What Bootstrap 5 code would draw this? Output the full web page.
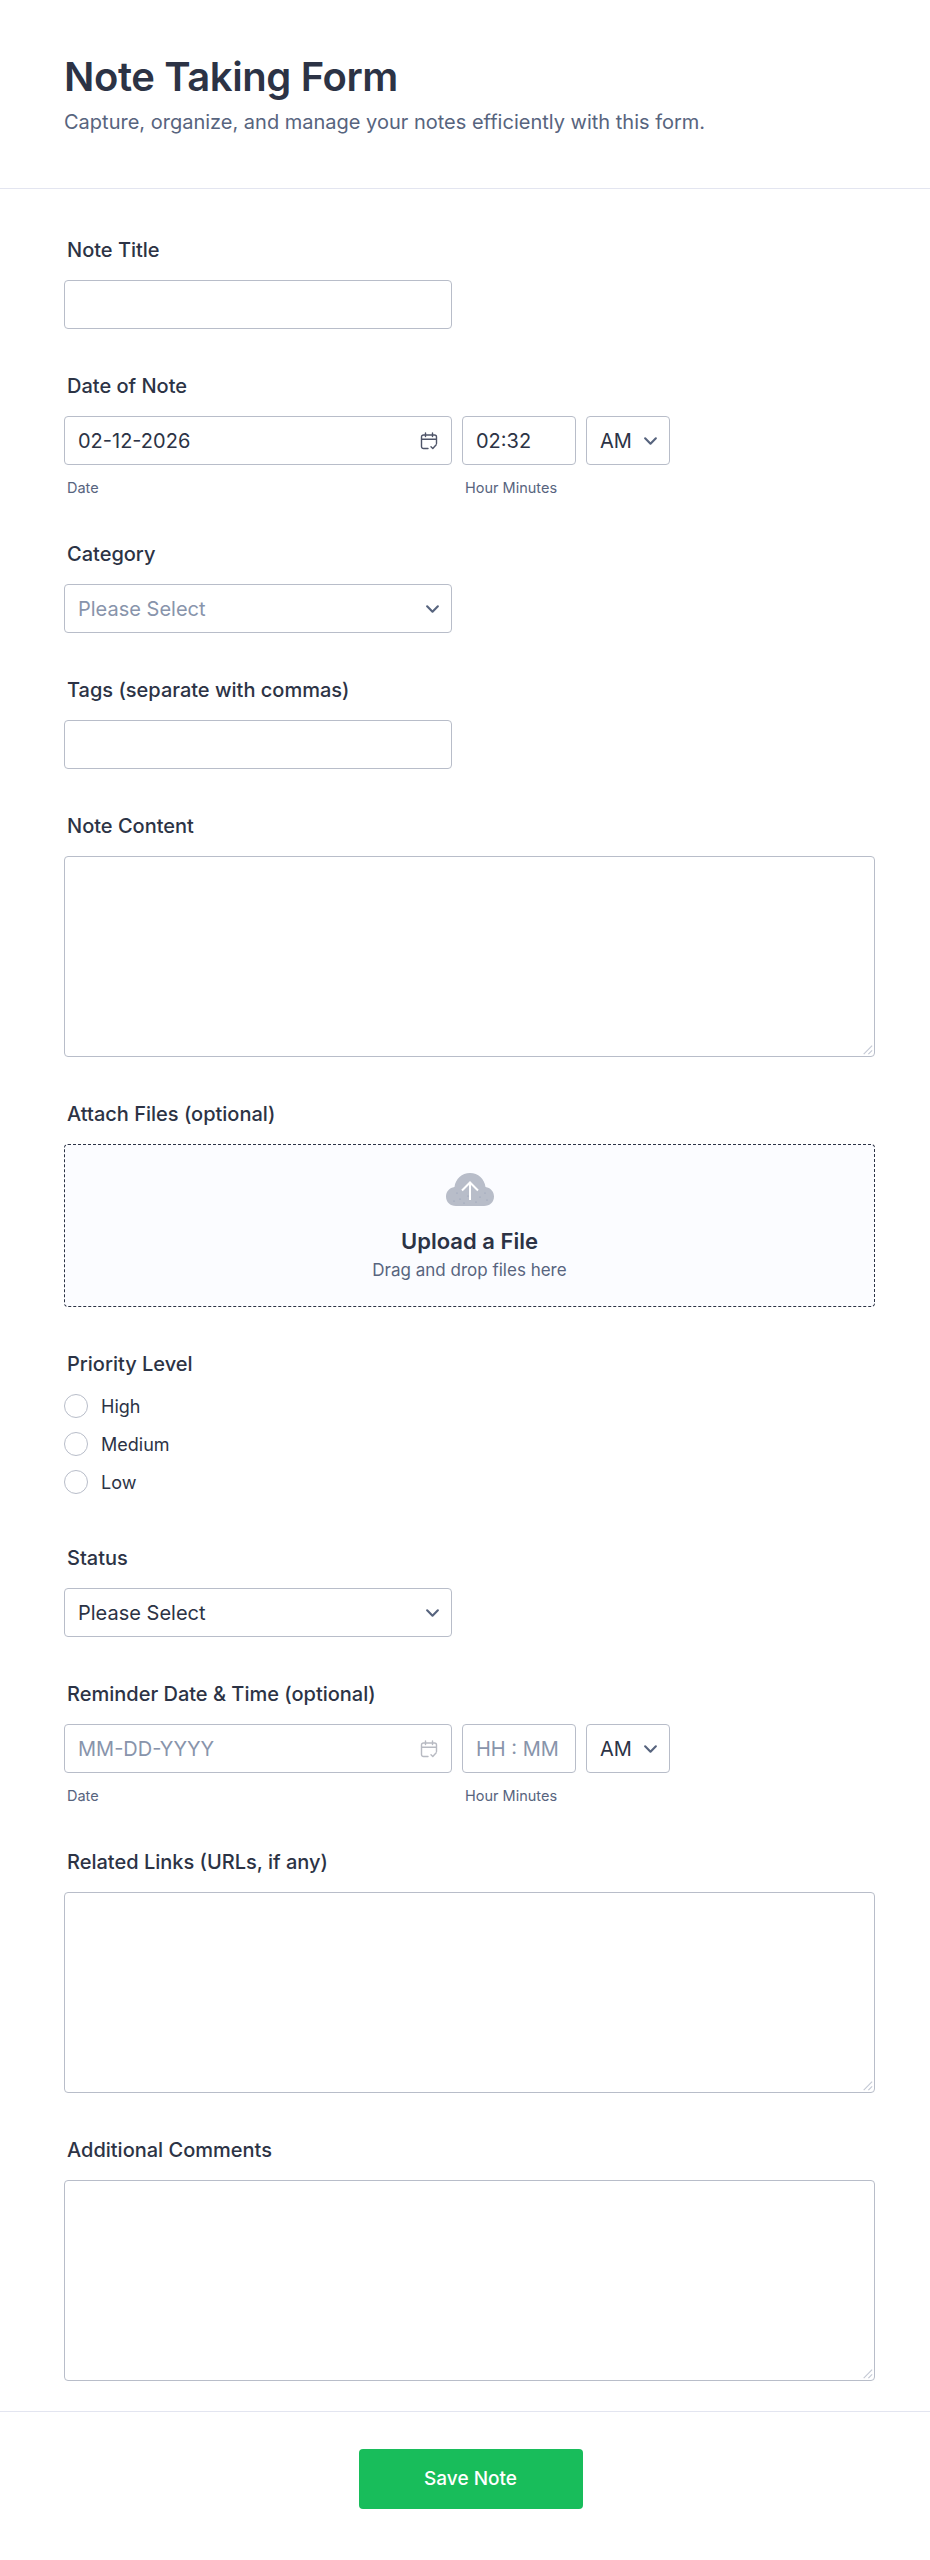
<!DOCTYPE html>
<html lang="en">
<head>
  <meta charset="UTF-8">
  <title>Note Taking Form</title>
  <link href="https://cdn.jsdelivr.net/npm/bootstrap@5.3.0/dist/css/bootstrap.min.css" rel="stylesheet">
  <style>
    body {
      font-family: Inter, "Liberation Sans", sans-serif;
      color: #2c3345;
      background: #fff;
    }
    .form-head {
      height: 189px;
      padding: 53px 64px 0;
      border-bottom: 1px solid #e3e5f0;
    }
    .form-head h1 {
      font-size: 40px;
      line-height: 48px;
      font-weight: 600;
      letter-spacing: -.4px;
      color: #2c3345;
      margin: 0 0 7px;
    }
    .form-head p {
      font-size: 20px;
      line-height: 28px;
      color: #57647e;
      margin: 0;
    }
    .form-body {
      padding: 49px 55px 0 64px;
    }
    .field-box {
      margin-bottom: 45px;
    }
    .field-label {
      display: block;
      font-size: 20px;
      line-height: 24px;
      font-weight: 500;
      color: #2c3345;
      padding-left: 3px;
      margin-bottom: 18px;
    }
    .form-control, .form-select {
      height: 49px;
      font-family: inherit;
      font-size: 20px;
      color: #2c3345;
      border: 1px solid #b8bdc9;
      border-radius: 4px;
      padding: 0 13px;
      box-shadow: none;
    }
    .form-control::placeholder {
      color: #8894ab;
    }
    textarea.form-control {
      height: 201px;
    }
    textarea.form-control::-webkit-resizer {
      background: url("data:image/svg+xml,%3csvg xmlns='http://www.w3.org/2000/svg' viewBox='0 0 16 16'%3e%3cpath fill='none' stroke='%23c3c8d4' stroke-width='1.2' d='M5 14L14 5M10 14l4-4'/%3e%3c/svg%3e") no-repeat center;
    }
    .form-select {
      padding-right: 30px;
      background-image: url("data:image/svg+xml,%3csvg xmlns='http://www.w3.org/2000/svg' viewBox='0 0 14 9'%3e%3cpath fill='none' stroke='%2357647e' stroke-width='2' stroke-linecap='round' stroke-linejoin='round' d='M2 2l5 5 5-5'/%3e%3c/svg%3e");
      background-size: 15px 10px;
      background-position: right 11px center;
    }
    .select-empty {
      color: #8894ab;
    }
    .wide-input {
      width: 388px;
    }
    .time-input {
      width: 114px;
    }
    .ampm-select {
      width: 84px;
    }
    .date-row {
      gap: 10px;
    }
    .date-icon {
      position: absolute;
      top: 16px;
      right: 14px;
      width: 18px;
      height: 18px;
      color: #4e5468;
    }
    .date-icon.faded {
      opacity: .4;
    }
    .sub-label {
      font-size: 14.500px;
      line-height: 18px;
      color: #57647e;
      padding-left: 3px;
      margin-top: 14px;
    }
    .drop-zone {
      height: 163px;
      background: #fbfcff;
      border: 1px dashed #2c3345;
      border-radius: 4px;
      padding-top: 28px;
    }
    .drop-title {
      font-size: 22px;
      line-height: 28px;
      font-weight: 600;
      margin-top: 21px;
    }
    .drop-hint {
      font-size: 17px;
      line-height: 24px;
      color: #57647e;
      margin-top: 3px;
    }
    .choice-list {
      margin-top: -7px;
    }
    .choice-row {
      display: flex;
      align-items: center;
      gap: 13px;
      height: 38px;
      font-size: 18px;
    }
    .choice-row .form-check-input {
      width: 24px;
      height: 24px;
      margin: 0;
      border: 1px solid #b8bdc9;
    }
    .form-foot {
      border-top: 1px solid #e3e5f0;
      margin-top: -15px;
      padding: 37px 0 0 11px;
    }
    .save-btn {
      width: 224px;
      height: 60px;
      font-size: 19px;
      font-weight: 500;
      color: #fff;
      background: #18bd5b;
      border: 0;
      border-radius: 4px;
    }
  </style>
</head>
<body>
  <svg width="0" height="0" class="d-none">
    <symbol id="cal" viewBox="0 0 18 18">
      <path fill="none" stroke="currentColor" stroke-width="1.4" stroke-linecap="round" stroke-linejoin="round" d="M8 16.500H3.500A2 2 0 0 1 1.500 14.500V5A2 2 0 0 1 3.500 3h11a2 2 0 0 1 2 2v6.500M1.500 7.300h15M5.500 1v3.500M12.500 1v3.500M11 14.800l1.800 1.700 3.400-3.800"/>
    </symbol>
  </svg>

  <header class="form-head">
    <h1>Note Taking Form</h1>
    <p>Capture, organize, and manage your notes efficiently with this form.</p>
  </header>

  <form class="form-body">
    <div class="field-box">
      <label class="field-label" for="noteTitle">Note Title</label>
      <input type="text" class="form-control wide-input" id="noteTitle">
    </div>

    <div class="field-box">
      <label class="field-label" for="noteDate">Date of Note</label>
      <div class="d-flex date-row">
        <div class="position-relative">
          <input type="text" class="form-control wide-input" id="noteDate" value="02-12-2026">
          <svg class="date-icon"><use href="#cal"/></svg>
          <div class="sub-label">Date</div>
        </div>
        <div>
          <input type="text" class="form-control time-input" value="02:32">
          <div class="sub-label">Hour Minutes</div>
        </div>
        <div>
          <select class="form-select ampm-select"><option>AM</option><option>PM</option></select>
        </div>
      </div>
    </div>

    <div class="field-box">
      <label class="field-label" for="category">Category</label>
      <select class="form-select wide-input select-empty" id="category"><option>Please Select</option></select>
    </div>

    <div class="field-box">
      <label class="field-label" for="tags">Tags (separate with commas)</label>
      <input type="text" class="form-control wide-input" id="tags">
    </div>

    <div class="field-box">
      <label class="field-label" for="noteContent">Note Content</label>
      <textarea class="form-control" id="noteContent"></textarea>
    </div>

    <div class="field-box">
      <label class="field-label">Attach Files (optional)</label>
      <div class="drop-zone text-center">
        <svg width="48" height="33" viewBox="0 0 48 33" class="d-block mx-auto">
          <path fill="#b8bdc9" d="M10 33C4 33 0 29 0 23.500 0 18.500 3.500 14.800 8.500 14 9.500 6 15.800 0 24 0s14.500 6 15.500 14C44.500 14.800 48 18.500 48 23.500 48 29 44 33 38 33z"/>
          <g fill="#8e9ab5">
            <circle cx="11" cy="20" r=".6"/><circle cx="14" cy="26" r=".6"/><circle cx="8" cy="28" r=".6"/>
            <circle cx="18" cy="30" r=".6"/><circle cx="22" cy="23" r=".6"/><circle cx="30" cy="29" r=".6"/>
            <circle cx="34" cy="24" r=".6"/><circle cx="39" cy="20" r=".6"/><circle cx="41" cy="27" r=".6"/>
          </g>
          <path fill="none" stroke="#fff" stroke-width="2" d="M24 27V10M16 17.500l8-8 8 8"/>
        </svg>
        <div class="drop-title">Upload a File</div>
        <div class="drop-hint">Drag and drop files here</div>
      </div>
    </div>

    <div class="field-box">
      <label class="field-label">Priority Level</label>
      <div class="choice-list">
        <label class="choice-row"><input class="form-check-input" type="radio" name="priority">High</label>
        <label class="choice-row"><input class="form-check-input" type="radio" name="priority">Medium</label>
        <label class="choice-row"><input class="form-check-input" type="radio" name="priority">Low</label>
      </div>
    </div>

    <div class="field-box">
      <label class="field-label" for="status">Status</label>
      <select class="form-select wide-input" id="status"><option>Please Select</option></select>
    </div>

    <div class="field-box">
      <label class="field-label" for="reminder">Reminder Date &amp; Time (optional)</label>
      <div class="d-flex date-row">
        <div class="position-relative">
          <input type="text" class="form-control wide-input" id="reminder" placeholder="MM-DD-YYYY">
          <svg class="date-icon faded"><use href="#cal"/></svg>
          <div class="sub-label">Date</div>
        </div>
        <div>
          <input type="text" class="form-control time-input" placeholder="HH : MM">
          <div class="sub-label">Hour Minutes</div>
        </div>
        <div>
          <select class="form-select ampm-select"><option>AM</option><option>PM</option></select>
        </div>
      </div>
    </div>

    <div class="field-box">
      <label class="field-label" for="links">Related Links (URLs, if any)</label>
      <textarea class="form-control" id="links"></textarea>
    </div>

    <div class="field-box">
      <label class="field-label" for="comments">Additional Comments</label>
      <textarea class="form-control" id="comments"></textarea>
    </div>
  </form>

  <footer class="form-foot text-center">
    <button type="button" class="btn save-btn">Save Note</button>
  </footer>

  <script src="https://cdn.jsdelivr.net/npm/bootstrap@5.3.0/dist/js/bootstrap.bundle.min.js"></script>
</body>
</html>
